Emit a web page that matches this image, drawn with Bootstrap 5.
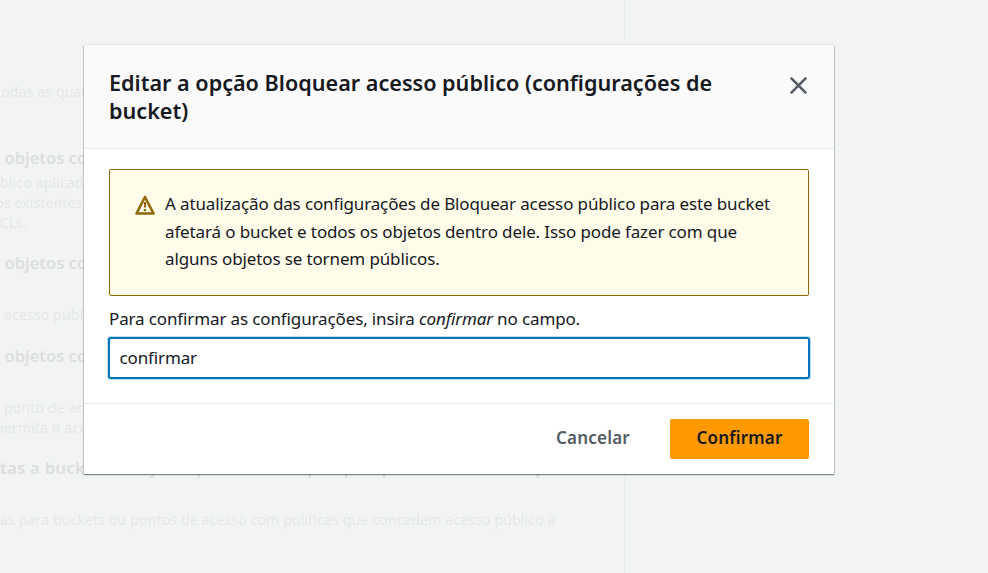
<!DOCTYPE html>
<html lang="pt-BR">
<head>
<meta charset="utf-8">
<meta name="viewport" content="width=device-width, initial-scale=1">
<title>Editar Bloquear acesso público</title>
<link rel="stylesheet" href="https://cdn.jsdelivr.net/npm/bootstrap@5.3.0/dist/css/bootstrap.min.css">
<style>
body{font-family:"Noto Sans","Open Sans",sans-serif;background:#f2f3f3;color:#16191f;width:988px;height:573px}
.backdrop-page{width:625px;height:573px;background:#f2f4f4;border-right:1px solid #eaeded;color:#e5e7e8;font-size:14px;letter-spacing:.16px;line-height:20px;white-space:nowrap;padding-top:82px}
.backdrop-page h3{font-size:16.8px;letter-spacing:.2px;line-height:22px;font-weight:600;color:#dcdee0}
.backdrop-page .opt{margin:0 0 31px -10px}
.backdrop-page .opt-label{font-size:16.5px;letter-spacing:0}
.backdrop-page .first-opt{margin-bottom:4px}
.backdrop-page .intro{margin:0 0 45px -4px}
.backdrop-page .desc{margin:0 0 19px}
.backdrop-page .clip-a{margin-left:-5px}
.backdrop-page .clip-b{margin-left:-9px}
.dialog-layer{position:absolute;inset:0;padding:45px 0 0 84px}
.dialog-box{width:750px;height:429px;background:#fff;box-shadow:0 1px 1px 0 rgba(0,28,36,.3),1px 1px 1px 0 rgba(0,28,36,.15),-1px 1px 1px 0 rgba(0,28,36,.15),0 -1px 0 #e6eaea}
.dialog-head{height:104px;background:#fafafa;border-bottom:1px solid #eaeded;padding:24px 25px 0}
.dialog-title{font-size:21.6px;line-height:28px;font-weight:600;width:640px}
.close-x{margin:7.5px 2.5px 0 0;line-height:0}
.dialog-content{height:254px;padding:20px 25px 0}
.warn-box{height:127px;background:#fffce9;border:1px solid #906806;border-radius:2px;padding:20px 25px 0;font-size:17px;letter-spacing:-.13px;line-height:27.6px;white-space:nowrap}
.warn-box svg{margin:5px 10px 0 0}
.hint{font-size:17px;letter-spacing:-.13px;line-height:24px;margin-top:11px;white-space:nowrap}
.field-text.form-control{height:42px;margin:6px -1px 0;width:702px;border:2px solid #0073bb;border-radius:3px;box-shadow:0 0 0 1px #b8dcf0;font-size:17px;letter-spacing:-.13px;padding:0 9.5px 1px;color:#16191f}
.dialog-foot{height:71px;border-top:1px solid #eaeded;padding:15px 25px 0}
.dialog-foot .btn{height:40px;border:0;border-radius:2px;font-size:17px;font-weight:600;padding:0 0 2px;line-height:36px;letter-spacing:.2px}
.btn-cancel{color:#545b64;width:74px;margin-right:40px}
.btn-confirm,.btn-confirm:hover{background:#ff9900;color:#16191f;width:139px}
</style>
<script src="https://cdn.jsdelivr.net/npm/bootstrap@5.3.0/dist/js/bootstrap.bundle.min.js"></script>
</head>
<body class="overflow-hidden position-relative">
<main class="backdrop-page overflow-hidden" aria-hidden="true">
<p class="intro">todas as quatro</p>
<h3 class="opt opt-label first-opt">o objetos concedido</h3>
<p class="desc">blico aplicadas<br><span class="clip-a">os existentes.</span><br><span class="clip-b">ACLs.</span></p>
<h3 class="opt opt-label">o objetos concedido</h3>
<p class="desc mb-3 pb-1 ps-1">acesso público</p>
<h3 class="opt opt-label">o objetos concedido</h3>
<p class="desc"><span class="ps-1">ponto de acesso</span><br><span class="clip-a">permita o acesso</span></p>
<h3 class="opt ms-0">tas a buckets e objetos por meio de qualquer política de bucket pública</h3>
<p class="mb-0">as para buckets ou pontos de acesso com políticas que concedem acesso público a</p>
</main>
<div class="dialog-layer">
<section class="dialog-box" role="dialog">
<header class="dialog-head d-flex justify-content-between align-items-start">
<h1 class="dialog-title mb-0"><span>Editar a opção Bloquear acesso público (configurações de</span><br><span>bucket)</span></h1>
<button class="close-x btn p-0 border-0" aria-label="Fechar"><svg width="17" height="17" viewBox="0 0 17 17" fill="none" stroke="#545b64" stroke-width="2.6"><path d="M.8.8l15.4 15.4M16.2.8L.8 16.2"/></svg></button>
</header>
<div class="dialog-content">
<div class="warn-box d-flex align-items-start">
<svg width="20" height="20" viewBox="0 0 20 20" fill="none" stroke="#906806" stroke-width="2.6"><path d="M10 2L18.5 18.5H1.5z" stroke-linejoin="round"/><path d="M10 7v5.5M10 14v2.2" stroke-width="2.2"/></svg>
<div><span>A atualização das configurações de Bloquear acesso público para este bucket</span><br><span>afetará o bucket e todos os objetos dentro dele. Isso pode fazer com que</span><br><span>alguns objetos se tornem públicos.</span></div>
</div>
<p class="hint mb-0">Para confirmar as configurações, insira <em>confirmar</em> no campo.</p>
<input class="field-text form-control" value="confirmar">
</div>
<footer class="dialog-foot d-flex justify-content-end">
<button class="btn btn-cancel">Cancelar</button><button class="btn btn-confirm">Confirmar</button>
</footer>
</section>
</div>
</body>
</html>
